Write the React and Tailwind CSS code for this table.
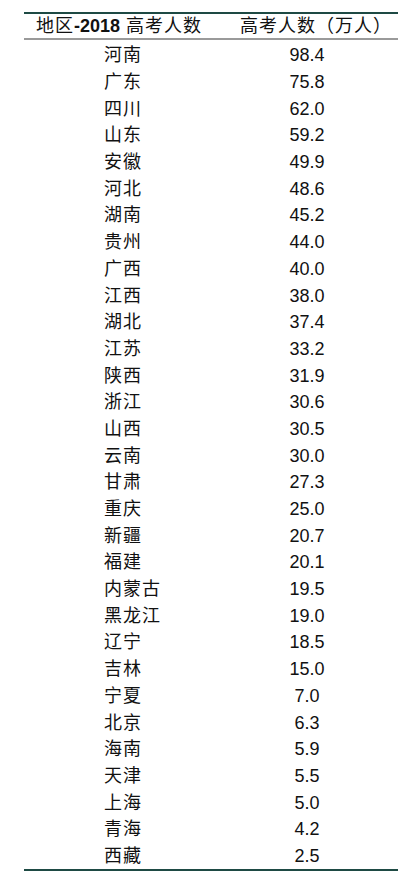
import React from 'react';

const rows = [
  ['河南', '98.4'],
  ['广东', '75.8'],
  ['四川', '62.0'],
  ['山东', '59.2'],
  ['安徽', '49.9'],
  ['河北', '48.6'],
  ['湖南', '45.2'],
  ['贵州', '44.0'],
  ['广西', '40.0'],
  ['江西', '38.0'],
  ['湖北', '37.4'],
  ['江苏', '33.2'],
  ['陕西', '31.9'],
  ['浙江', '30.6'],
  ['山西', '30.5'],
  ['云南', '30.0'],
  ['甘肃', '27.3'],
  ['重庆', '25.0'],
  ['新疆', '20.7'],
  ['福建', '20.1'],
  ['内蒙古', '19.5'],
  ['黑龙江', '19.0'],
  ['辽宁', '18.5'],
  ['吉林', '15.0'],
  ['宁夏', '7.0'],
  ['北京', '6.3'],
  ['海南', '5.9'],
  ['天津', '5.5'],
  ['上海', '5.0'],
  ['青海', '4.2'],
  ['西藏', '2.5'],
];

const cjk = { fontFamily: '"Liberation Sans", "Noto Sans CJK SC", sans-serif' };

export default function App() {
  return (
    <div className="w-[414px] h-[880px] bg-white pt-[12px] text-[#111]" style={cjk}>
      <div className="mx-[24px] w-[374px] border-t-2 border-b-2 border-[#1e4a44]">
        {/* header */}
        <div className="grid grid-cols-2 h-[26px] items-center border-b-2 border-[#9a9a9a] text-[18px] leading-none">
          <div className="pl-[12px] whitespace-nowrap tracking-[1px]">
            地区<span className="font-bold tracking-normal">-2018</span> 高考人数
          </div>
          <div className="pl-[29px] whitespace-nowrap tracking-[1px]">高考人数（万人）</div>
        </div>
        {/* body */}
        <div className="pt-[2px]">
          {rows.map(([name, val]) => (
            <div key={name} className="grid grid-cols-2 h-[26.7px] items-center text-[18px] leading-none">
              <div className="pl-[80px] tracking-[1px]">{name}</div>
              <div className="pl-[5px] text-center">{val}</div>
            </div>
          ))}
        </div>
      </div>
    </div>
  );
}
